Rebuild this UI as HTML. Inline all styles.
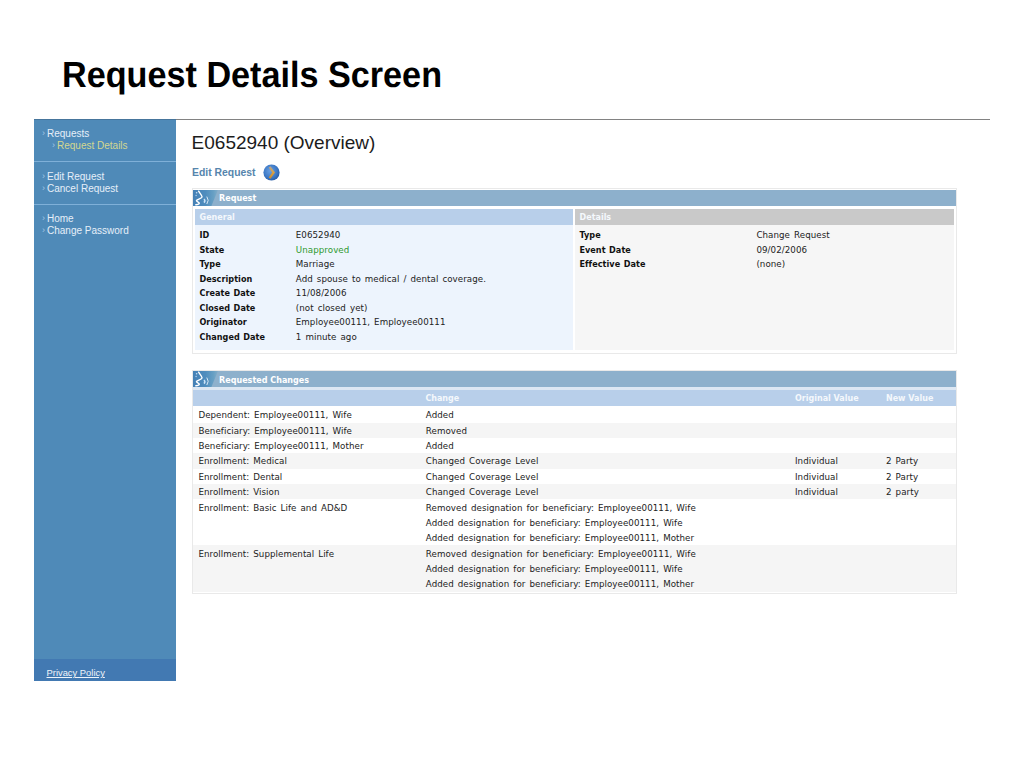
<!DOCTYPE html>
<html lang="en">
<head>
<meta charset="utf-8">
<title>Request Details Screen</title>
<style>
html,body{margin:0;padding:0;background:#fff;}
body{width:1024px;height:768px;position:relative;overflow:hidden;font-family:"Liberation Sans",sans-serif;}
.abs{position:absolute;}
#title{text-rendering:geometricPrecision;left:62px;top:53.6px;font:bold 34.2px/40px "Liberation Sans",sans-serif;color:#000;white-space:nowrap;transform:scaleY(1.063);transform-origin:0 0;}
#topline{left:176px;top:119px;width:814px;height:1px;background:#828282;}
#side{left:34px;top:119px;width:142px;height:562px;background:#4f8ab8;box-shadow:inset 0 1px 0 #46759c;}
#side .foot{position:absolute;left:0;bottom:0;width:142px;height:22.5px;background:#4279b2;}
#side .pp{position:absolute;left:12.5px;top:8.5px;font:9.4px/12px "Liberation Sans",sans-serif;color:#eef4fa;text-decoration:underline;white-space:nowrap;}
#side .div{position:absolute;left:0;width:142px;height:1px;background:#7fb0d8;}
.nav{position:absolute;font:10px/12.3px "Liberation Sans",sans-serif;color:#e6eff8;white-space:nowrap;}
.nav .a{position:absolute;left:-5px;top:-1px;color:#a6c8e6;font-style:normal;font-size:9px;}
.nav.sel{color:#d3d790;}
#h1{left:191.6px;top:131.2px;font:19px/24px "Liberation Sans",sans-serif;color:#1c1c1c;white-space:nowrap;}
#edit{left:192px;top:166.2px;font:bold 10.4px/14px "Liberation Sans",sans-serif;color:#5685ad;white-space:nowrap;}
.panel{position:absolute;left:192px;width:765px;background:#fff;border:1px solid #e9e9e9;box-sizing:border-box;}
.phead{overflow:hidden;position:absolute;left:0;top:1px;width:763px;height:15.6px;background:#8db0cc;}
.phead span{position:absolute;left:26px;top:2px;font:bold 8.05px/12px "DejaVu Sans",sans-serif;color:#fff;white-space:nowrap;}
.phead svg{position:absolute;left:0;top:0;}
.sub{position:absolute;height:16px;}
.sub span{position:absolute;left:4.6px;top:3.2px;font:bold 8px/12px "DejaVu Sans",sans-serif;color:#f4f8fc;white-space:nowrap;}
.row{position:absolute;left:0;width:763px;}
.t{position:absolute;font:8.7px/14.5px "DejaVu Sans",sans-serif;word-spacing:1.2px;letter-spacing:.06px;color:#222;white-space:nowrap;transform:scaleY(.915);transform-origin:0 72%;}
.b{font-weight:bold;font-size:8.1px;word-spacing:0.6px;color:#111;transform:none;}
</style>
</head>
<body>
<div id="title" class="abs">Request Details Screen</div>
<div id="topline" class="abs"></div>
<div id="side" class="abs">
  <div class="div" style="top:42px"></div>
  <div class="div" style="top:85px"></div>
  <div class="foot"><a class="pp">Privacy Policy</a></div>
  <div class="nav" style="left:13px;top:8.5px"><i class="a">&rsaquo;</i>Requests</div>
  <div class="nav sel" style="left:23px;top:20.8px"><i class="a">&rsaquo;</i>Request Details</div>
  <div class="nav" style="left:13px;top:51.5px"><i class="a">&rsaquo;</i>Edit Request</div>
  <div class="nav" style="left:13px;top:63.8px"><i class="a">&rsaquo;</i>Cancel Request</div>
  <div class="nav" style="left:13px;top:94px"><i class="a">&rsaquo;</i>Home</div>
  <div class="nav" style="left:13px;top:106.3px"><i class="a">&rsaquo;</i>Change Password</div>
</div>
<div id="h1" class="abs">E0652940 (Overview)</div>
<div id="edit" class="abs">Edit Request</div>
<svg class="abs" style="left:263px;top:163.5px" width="17" height="17" viewBox="0 0 17 17"><defs><radialGradient id="gg" cx="42%" cy="40%" r="62%"><stop offset="0" stop-color="#6aa0e2"/><stop offset=".7" stop-color="#3b77c4"/><stop offset="1" stop-color="#2a5da6"/></radialGradient><linearGradient id="gc" x1="0" y1="0" x2="0" y2="1"><stop offset="0" stop-color="#b4a48e"/><stop offset=".5" stop-color="#d9a043"/><stop offset="1" stop-color="#c98a2e"/></linearGradient></defs><circle cx="8.5" cy="8.5" r="8.1" fill="url(#gg)"/><path d="M6.6 2.9L10.6 8.5L6.6 14.1" fill="none" stroke="url(#gc)" stroke-width="2.3" stroke-linejoin="miter"/></svg>

<div class="panel" style="top:188px;height:166px">
  <div class="phead"><svg width="30" height="17" viewBox="0 0 30 17"><defs><linearGradient id="hg" x1="0" y1="0" x2="1" y2="0"><stop offset="0" stop-color="#4480b5"/><stop offset=".5" stop-color="#4f8dbe"/><stop offset=".82" stop-color="#68a0c4"/><stop offset="1" stop-color="#82adc9"/></linearGradient></defs><path d="M0 0H25L18 17H0Z" fill="url(#hg)"/><path d="M5.6 1.2C7 3.6 9 5.4 9.1 7C8.9 8.5 3.6 9.5 3.4 10.6C3.4 11.6 6.3 12 6.3 13.2C6.1 14.3 4.6 14.7 2.8 14.7" fill="none" stroke="#fff" stroke-width="1.4" stroke-linecap="round"/><circle cx="3.6" cy="2.7" r=".8" fill="#c6def3"/><circle cx="3.1" cy="5.5" r=".7" fill="#b4d2ee"/><path d="M11 9Q12.8 10.8 11 12.6" fill="none" stroke="#c9e2f8" stroke-width="1.5"/><path d="M13.8 6.6Q16.6 10.3 13.8 14" fill="none" stroke="#d9e8f5" stroke-width="1"/></svg>
<span style="top:3px">Request</span></div>
  <div class="sub" style="left:2px;top:20px;width:378px;height:15.6px;background:#b8cfea"><span>General</span></div>
  <div class="sub" style="left:382px;top:20px;width:379px;height:15.6px;background:#c9c9c9"><span>Details</span></div>
  <div class="abs" style="left:2px;top:35.6px;width:378px;height:125px;background:#edf4fd"></div>
  <div class="abs" style="left:382px;top:35.6px;width:379px;height:125px;background:#f6f6f6"></div>
  <div class="t b" style="left:6.4px;top:39.3px">ID</div>
  <div class="t" style="left:102.8px;top:39.3px">E0652940</div>
  <div class="t b" style="left:6.4px;top:53.8px">State</div>
  <div class="t" style="left:102.8px;top:53.8px;color:#2f9a2f">Unapproved</div>
  <div class="t b" style="left:6.4px;top:68.3px">Type</div>
  <div class="t" style="left:102.8px;top:68.3px">Marriage</div>
  <div class="t b" style="left:6.4px;top:82.8px">Description</div>
  <div class="t" style="left:102.8px;top:82.8px">Add spouse to medical / dental coverage.</div>
  <div class="t b" style="left:6.4px;top:97.3px">Create Date</div>
  <div class="t" style="left:102.8px;top:97.3px">11/08/2006</div>
  <div class="t b" style="left:6.4px;top:111.8px">Closed Date</div>
  <div class="t" style="left:102.8px;top:111.8px">(not closed yet)</div>
  <div class="t b" style="left:6.4px;top:126.3px">Originator</div>
  <div class="t" style="left:102.8px;top:126.3px">Employee00111, Employee00111</div>
  <div class="t b" style="left:6.4px;top:140.8px">Changed Date</div>
  <div class="t" style="left:102.8px;top:140.8px">1 minute ago</div>
  <div class="t b" style="left:386.4px;top:39.3px">Type</div>
  <div class="t" style="left:563.4px;top:39.3px">Change Request</div>
  <div class="t b" style="left:386.4px;top:53.8px">Event Date</div>
  <div class="t" style="left:563.4px;top:53.8px">09/02/2006</div>
  <div class="t b" style="left:386.4px;top:68.3px">Effective Date</div>
  <div class="t" style="left:563.4px;top:68.3px">(none)</div>
</div>
<div class="panel" style="top:370px;height:224px">
  <div class="phead" style="top:0;height:16.3px"><svg width="30" height="17" viewBox="0 0 30 17"><defs><linearGradient id="hg2" x1="0" y1="0" x2="1" y2="0"><stop offset="0" stop-color="#4480b5"/><stop offset=".5" stop-color="#4f8dbe"/><stop offset=".82" stop-color="#68a0c4"/><stop offset="1" stop-color="#82adc9"/></linearGradient></defs><path d="M0 0H25L18 17H0Z" fill="url(#hg2)"/><path d="M5.6 1.2C7 3.6 9 5.4 9.1 7C8.9 8.5 3.6 9.5 3.4 10.6C3.4 11.6 6.3 12 6.3 13.2C6.1 14.3 4.6 14.7 2.8 14.7" fill="none" stroke="#fff" stroke-width="1.4" stroke-linecap="round"/><circle cx="3.6" cy="2.7" r=".8" fill="#c6def3"/><circle cx="3.1" cy="5.5" r=".7" fill="#b4d2ee"/><path d="M11 9Q12.8 10.8 11 12.6" fill="none" stroke="#c9e2f8" stroke-width="1.5"/><path d="M13.8 6.6Q16.6 10.3 13.8 14" fill="none" stroke="#d9e8f5" stroke-width="1"/></svg>
<span style="top:3.6px">Requested Changes</span></div>
  <div class="abs" style="left:0;top:16.3px;width:763px;height:3px;background:#dce7f3"></div>
  <div class="sub" style="left:0;top:18.8px;width:763px;height:16.4px;background:#b8cfea"><span style="left:232.4px">Change</span><span style="left:602px">Original Value</span><span style="left:693px">New Value</span></div>
  <div class="row" style="top:36.20px;height:15.36px;background:#fff">
    <div class="t" style="left:5.4px;top:1.2px">Dependent: Employee00111, Wife</div>
    <div class="t" style="left:232.8px;top:1.20px">Added</div>
  </div>
  <div class="row" style="top:51.56px;height:15.36px;background:#f5f5f5">
    <div class="t" style="left:5.4px;top:1.2px">Beneficiary: Employee00111, Wife</div>
    <div class="t" style="left:232.8px;top:1.20px">Removed</div>
  </div>
  <div class="row" style="top:66.92px;height:15.36px;background:#fff">
    <div class="t" style="left:5.4px;top:1.2px">Beneficiary: Employee00111, Mother</div>
    <div class="t" style="left:232.8px;top:1.20px">Added</div>
  </div>
  <div class="row" style="top:82.28px;height:15.36px;background:#f5f5f5">
    <div class="t" style="left:5.4px;top:1.2px">Enrollment: Medical</div>
    <div class="t" style="left:232.8px;top:1.20px">Changed Coverage Level</div>
    <div class="t" style="left:602px;top:1.2px">Individual</div>
    <div class="t" style="left:693px;top:1.2px">2 Party</div>
  </div>
  <div class="row" style="top:97.64px;height:15.36px;background:#fff">
    <div class="t" style="left:5.4px;top:1.2px">Enrollment: Dental</div>
    <div class="t" style="left:232.8px;top:1.20px">Changed Coverage Level</div>
    <div class="t" style="left:602px;top:1.2px">Individual</div>
    <div class="t" style="left:693px;top:1.2px">2 Party</div>
  </div>
  <div class="row" style="top:113.00px;height:15.36px;background:#f5f5f5">
    <div class="t" style="left:5.4px;top:1.2px">Enrollment: Vision</div>
    <div class="t" style="left:232.8px;top:1.20px">Changed Coverage Level</div>
    <div class="t" style="left:602px;top:1.2px">Individual</div>
    <div class="t" style="left:693px;top:1.2px">2 party</div>
  </div>
  <div class="row" style="top:128.36px;height:46.08px;background:#fff">
    <div class="t" style="left:5.4px;top:1.2px">Enrollment: Basic Life and AD&amp;D</div>
    <div class="t" style="left:232.8px;top:1.20px">Removed designation for beneficiary: Employee00111, Wife</div>
    <div class="t" style="left:232.8px;top:16.56px">Added designation for beneficiary: Employee00111, Wife</div>
    <div class="t" style="left:232.8px;top:31.92px">Added designation for beneficiary: Employee00111, Mother</div>
  </div>
  <div class="row" style="top:174.44px;height:46.08px;background:#f5f5f5">
    <div class="t" style="left:5.4px;top:1.2px">Enrollment: Supplemental Life</div>
    <div class="t" style="left:232.8px;top:1.20px">Removed designation for beneficiary: Employee00111, Wife</div>
    <div class="t" style="left:232.8px;top:16.56px">Added designation for beneficiary: Employee00111, Wife</div>
    <div class="t" style="left:232.8px;top:31.92px">Added designation for beneficiary: Employee00111, Mother</div>
  </div>
</div>
</body>
</html>
